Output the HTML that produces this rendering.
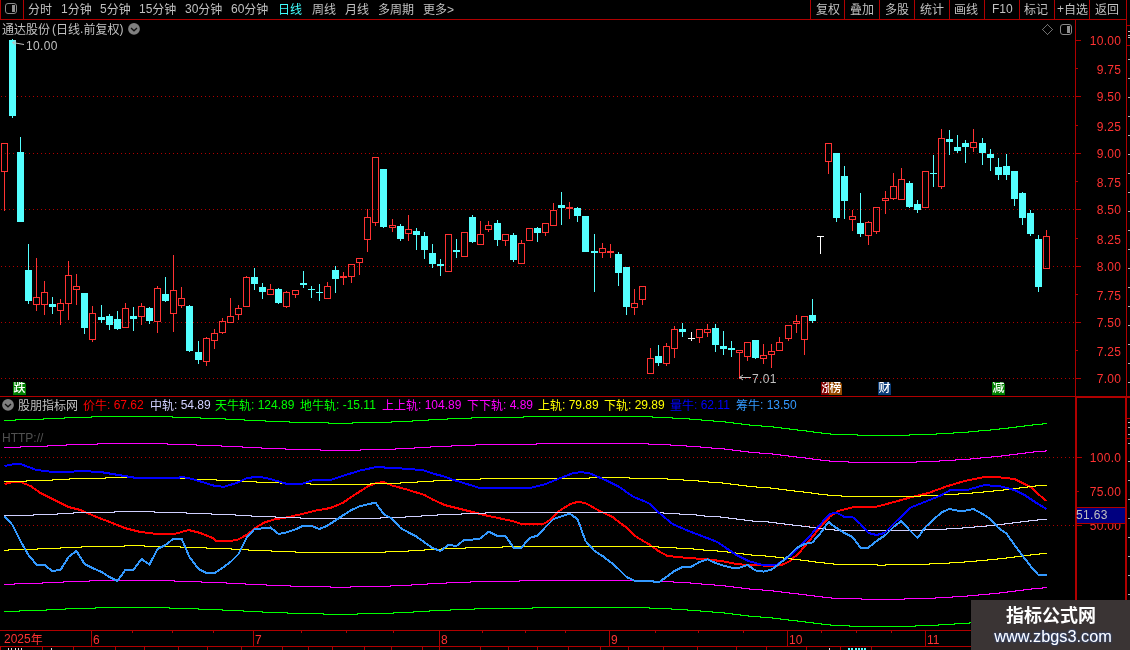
<!DOCTYPE html>
<html><head><meta charset="utf-8"><title>chart</title>
<style>
html,body{margin:0;padding:0;background:#000;}
#root{position:relative;will-change:transform;width:1130px;height:650px;overflow:hidden;background:#000;font-family:"Liberation Sans","Noto Sans CJK SC",sans-serif;}
.t{position:absolute;white-space:nowrap;line-height:16px;font-size:12px;font-weight:400}
.yl{right:9px;color:#ff3232;text-align:right;letter-spacing:0.33px;margin-right:-0.33px}
.n{letter-spacing:0.33px}
.d{position:relative;top:-1px}
.mk{position:absolute;top:382px;width:13px;height:13px;color:#fff;font-size:12px;line-height:13px;text-align:center;overflow:hidden;font-weight:500;clip-path:polygon(0 0,11px 0,13px 2px,13px 13px,0 13px)}
#wm{position:absolute;left:971px;top:600px;width:159px;height:50px;background:#3a3434;color:#fff;text-align:center;z-index:5}
#wm .w1{font-size:18px;font-weight:bold;line-height:20px;margin-top:6px;margin-left:1px}
#wm .w2{font-size:16.3px;line-height:18px;margin-top:1px;margin-left:5px;text-shadow:0 0 2px #36c}
</style></head><body><div id="root">
<svg width="1130" height="650" viewBox="0 0 1130 650" shape-rendering="crispEdges" style="position:absolute;left:0;top:0"><path d="M1 96.5H1074" stroke="#b00000" stroke-width="1" stroke-dasharray="1 3" fill="none"/>
<path d="M1 153.5H1074" stroke="#b00000" stroke-width="1" stroke-dasharray="1 3" fill="none"/>
<path d="M1 209.5H1074" stroke="#b00000" stroke-width="1" stroke-dasharray="1 3" fill="none"/>
<path d="M1 266.5H1074" stroke="#b00000" stroke-width="1" stroke-dasharray="1 3" fill="none"/>
<path d="M1 322.5H1074" stroke="#b00000" stroke-width="1" stroke-dasharray="1 3" fill="none"/>
<path d="M1 378.5H1074" stroke="#b00000" stroke-width="1" stroke-dasharray="1 3" fill="none"/>
<path d="M1 457.5H1074" stroke="#b00000" stroke-width="1" stroke-dasharray="1 3" fill="none"/>
<path d="M1 525.5H1074" stroke="#b00000" stroke-width="1" stroke-dasharray="1 3" fill="none"/>
<rect x="4" y="172" width="1" height="39" fill="#ff3232"/>
<rect x="1.5" y="143.5" width="6" height="28" fill="none" stroke="#ff3232" stroke-width="1"/>
<rect x="12" y="39" width="1" height="79" fill="#54ffff"/>
<rect x="9" y="40" width="7" height="76" fill="#54ffff"/>
<rect x="20" y="137" width="1" height="85" fill="#54ffff"/>
<rect x="17" y="152" width="7" height="70" fill="#54ffff"/>
<rect x="28" y="244" width="1" height="60" fill="#54ffff"/>
<rect x="25" y="270" width="7" height="31" fill="#54ffff"/>
<rect x="36" y="258" width="1" height="39" fill="#ff3232"/>
<rect x="36" y="305" width="1" height="6" fill="#ff3232"/>
<rect x="33.5" y="297.5" width="6" height="7" fill="none" stroke="#ff3232" stroke-width="1"/>
<rect x="44" y="281" width="1" height="11" fill="#ff3232"/>
<rect x="44" y="305" width="1" height="10" fill="#ff3232"/>
<rect x="41.5" y="292.5" width="6" height="12" fill="none" stroke="#ff3232" stroke-width="1"/>
<rect x="52" y="297" width="1" height="17" fill="#54ffff"/>
<rect x="49" y="304" width="7" height="3" fill="#54ffff"/>
<rect x="60" y="299" width="1" height="4" fill="#ff3232"/>
<rect x="60" y="311" width="1" height="14" fill="#ff3232"/>
<rect x="57.5" y="303.5" width="6" height="7" fill="none" stroke="#ff3232" stroke-width="1"/>
<rect x="68" y="261" width="1" height="14" fill="#ff3232"/>
<rect x="68" y="304" width="1" height="16" fill="#ff3232"/>
<rect x="65.5" y="275.5" width="6" height="28" fill="none" stroke="#ff3232" stroke-width="1"/>
<rect x="76" y="274" width="1" height="12" fill="#ff3232"/>
<rect x="76" y="290" width="1" height="15" fill="#ff3232"/>
<rect x="73.5" y="286.5" width="6" height="3" fill="none" stroke="#ff3232" stroke-width="1"/>
<rect x="84" y="293" width="1" height="41" fill="#54ffff"/>
<rect x="81" y="293" width="7" height="35" fill="#54ffff"/>
<rect x="92" y="306" width="1" height="7" fill="#ff3232"/>
<rect x="92" y="340" width="1" height="2" fill="#ff3232"/>
<rect x="89.5" y="313.5" width="6" height="26" fill="none" stroke="#ff3232" stroke-width="1"/>
<rect x="101" y="305" width="1" height="18" fill="#54ffff"/>
<rect x="98" y="317" width="7" height="3" fill="#54ffff"/>
<rect x="109" y="314" width="1" height="16" fill="#54ffff"/>
<rect x="106" y="316" width="7" height="9" fill="#54ffff"/>
<rect x="117" y="311" width="1" height="19" fill="#54ffff"/>
<rect x="114" y="319" width="7" height="10" fill="#54ffff"/>
<rect x="125" y="303" width="1" height="5" fill="#ff3232"/>
<rect x="122.5" y="308.5" width="6" height="19" fill="none" stroke="#ff3232" stroke-width="1"/>
<rect x="133" y="307" width="1" height="24" fill="#54ffff"/>
<rect x="130" y="316" width="7" height="3" fill="#54ffff"/>
<rect x="141" y="303" width="1" height="3" fill="#ff3232"/>
<rect x="141" y="317" width="1" height="8" fill="#ff3232"/>
<rect x="138.5" y="306.5" width="6" height="10" fill="none" stroke="#ff3232" stroke-width="1"/>
<rect x="149" y="307" width="1" height="17" fill="#54ffff"/>
<rect x="146" y="308" width="7" height="13" fill="#54ffff"/>
<rect x="157" y="286" width="1" height="2" fill="#ff3232"/>
<rect x="157" y="322" width="1" height="11" fill="#ff3232"/>
<rect x="154.5" y="288.5" width="6" height="33" fill="none" stroke="#ff3232" stroke-width="1"/>
<rect x="165" y="277" width="1" height="25" fill="#54ffff"/>
<rect x="162" y="294" width="7" height="7" fill="#54ffff"/>
<rect x="173" y="255" width="1" height="35" fill="#ff3232"/>
<rect x="173" y="314" width="1" height="18" fill="#ff3232"/>
<rect x="170.5" y="290.5" width="6" height="23" fill="none" stroke="#ff3232" stroke-width="1"/>
<rect x="181" y="287" width="1" height="11" fill="#ff3232"/>
<rect x="181" y="306" width="1" height="2" fill="#ff3232"/>
<rect x="178.5" y="298.5" width="6" height="7" fill="none" stroke="#ff3232" stroke-width="1"/>
<rect x="189" y="305" width="1" height="47" fill="#54ffff"/>
<rect x="186" y="306" width="7" height="45" fill="#54ffff"/>
<rect x="198" y="341" width="1" height="23" fill="#54ffff"/>
<rect x="195" y="352" width="7" height="8" fill="#54ffff"/>
<rect x="206" y="337" width="1" height="1" fill="#ff3232"/>
<rect x="206" y="362" width="1" height="4" fill="#ff3232"/>
<rect x="203.5" y="338.5" width="6" height="23" fill="none" stroke="#ff3232" stroke-width="1"/>
<rect x="214" y="329" width="1" height="4" fill="#ff3232"/>
<rect x="214" y="341" width="1" height="8" fill="#ff3232"/>
<rect x="211.5" y="333.5" width="6" height="7" fill="none" stroke="#ff3232" stroke-width="1"/>
<rect x="222" y="318" width="1" height="3" fill="#ff3232"/>
<rect x="222" y="333" width="1" height="1" fill="#ff3232"/>
<rect x="219.5" y="321.5" width="6" height="11" fill="none" stroke="#ff3232" stroke-width="1"/>
<rect x="230" y="298" width="1" height="18" fill="#ff3232"/>
<rect x="227.5" y="316.5" width="6" height="6" fill="none" stroke="#ff3232" stroke-width="1"/>
<rect x="238" y="305" width="1" height="3" fill="#ff3232"/>
<rect x="238" y="315" width="1" height="5" fill="#ff3232"/>
<rect x="235.5" y="308.5" width="6" height="6" fill="none" stroke="#ff3232" stroke-width="1"/>
<rect x="246" y="276" width="1" height="1" fill="#ff3232"/>
<rect x="243.5" y="277.5" width="6" height="29" fill="none" stroke="#ff3232" stroke-width="1"/>
<rect x="254" y="268" width="1" height="22" fill="#54ffff"/>
<rect x="251" y="277" width="7" height="7" fill="#54ffff"/>
<rect x="262" y="283" width="1" height="16" fill="#54ffff"/>
<rect x="259" y="287" width="7" height="5" fill="#54ffff"/>
<rect x="270" y="284" width="1" height="5" fill="#ff3232"/>
<rect x="267.5" y="289.5" width="6" height="5" fill="none" stroke="#ff3232" stroke-width="1"/>
<rect x="278" y="288" width="1" height="16" fill="#54ffff"/>
<rect x="275" y="289" width="7" height="14" fill="#54ffff"/>
<rect x="286" y="291" width="1" height="1" fill="#ff3232"/>
<rect x="286" y="307" width="1" height="1" fill="#ff3232"/>
<rect x="283.5" y="292.5" width="6" height="14" fill="none" stroke="#ff3232" stroke-width="1"/>
<rect x="295" y="295" width="1" height="3" fill="#ff3232"/>
<rect x="292.5" y="290.5" width="6" height="4" fill="none" stroke="#ff3232" stroke-width="1"/>
<rect x="303" y="271" width="1" height="17" fill="#54ffff"/>
<rect x="300" y="283" width="7" height="2" fill="#54ffff"/>
<rect x="311" y="286" width="1" height="12" fill="#54ffff"/>
<rect x="308" y="289" width="7" height="1" fill="#54ffff"/>
<rect x="319" y="284" width="1" height="17" fill="#54ffff"/>
<rect x="316" y="292" width="7" height="1" fill="#54ffff"/>
<rect x="327" y="282" width="1" height="4" fill="#ff3232"/>
<rect x="324.5" y="286.5" width="6" height="12" fill="none" stroke="#ff3232" stroke-width="1"/>
<rect x="335" y="266" width="1" height="27" fill="#54ffff"/>
<rect x="332" y="270" width="7" height="9" fill="#54ffff"/>
<rect x="343" y="272" width="1" height="4" fill="#ff3232"/>
<rect x="343" y="278" width="1" height="7" fill="#ff3232"/>
<rect x="340" y="276" width="7" height="2" fill="#ff3232"/>
<rect x="351" y="277" width="1" height="6" fill="#ff3232"/>
<rect x="348.5" y="264.5" width="6" height="12" fill="none" stroke="#ff3232" stroke-width="1"/>
<rect x="359" y="263" width="1" height="12" fill="#ff3232"/>
<rect x="356.5" y="258.5" width="6" height="4" fill="none" stroke="#ff3232" stroke-width="1"/>
<rect x="367" y="209" width="1" height="8" fill="#ff3232"/>
<rect x="367" y="240" width="1" height="12" fill="#ff3232"/>
<rect x="364.5" y="217.5" width="6" height="22" fill="none" stroke="#ff3232" stroke-width="1"/>
<rect x="375" y="223" width="1" height="3" fill="#ff3232"/>
<rect x="372.5" y="157.5" width="6" height="65" fill="none" stroke="#ff3232" stroke-width="1"/>
<rect x="383" y="169" width="1" height="59" fill="#54ffff"/>
<rect x="380" y="169" width="7" height="58" fill="#54ffff"/>
<rect x="392" y="219" width="1" height="6" fill="#ff3232"/>
<rect x="392" y="228" width="1" height="4" fill="#ff3232"/>
<rect x="389.5" y="225.5" width="6" height="2" fill="none" stroke="#ff3232" stroke-width="1"/>
<rect x="400" y="224" width="1" height="17" fill="#54ffff"/>
<rect x="397" y="226" width="7" height="13" fill="#54ffff"/>
<rect x="408" y="215" width="1" height="14" fill="#ff3232"/>
<rect x="408" y="234" width="1" height="7" fill="#ff3232"/>
<rect x="405.5" y="229.5" width="6" height="4" fill="none" stroke="#ff3232" stroke-width="1"/>
<rect x="416" y="228" width="1" height="22" fill="#54ffff"/>
<rect x="413" y="231" width="7" height="4" fill="#54ffff"/>
<rect x="424" y="232" width="1" height="27" fill="#54ffff"/>
<rect x="421" y="236" width="7" height="14" fill="#54ffff"/>
<rect x="432" y="244" width="1" height="24" fill="#54ffff"/>
<rect x="429" y="253" width="7" height="11" fill="#54ffff"/>
<rect x="440" y="259" width="1" height="17" fill="#54ffff"/>
<rect x="437" y="264" width="7" height="2" fill="#54ffff"/>
<rect x="445.5" y="234.5" width="6" height="37" fill="none" stroke="#ff3232" stroke-width="1"/>
<rect x="456" y="239" width="1" height="19" fill="#54ffff"/>
<rect x="453" y="250" width="7" height="2" fill="#54ffff"/>
<rect x="461.5" y="232.5" width="6" height="24" fill="none" stroke="#ff3232" stroke-width="1"/>
<rect x="472" y="215" width="1" height="28" fill="#54ffff"/>
<rect x="469" y="217" width="7" height="25" fill="#54ffff"/>
<rect x="480" y="221" width="1" height="13" fill="#ff3232"/>
<rect x="477.5" y="234.5" width="6" height="10" fill="none" stroke="#ff3232" stroke-width="1"/>
<rect x="488" y="221" width="1" height="4" fill="#ff3232"/>
<rect x="488" y="230" width="1" height="2" fill="#ff3232"/>
<rect x="485.5" y="225.5" width="6" height="4" fill="none" stroke="#ff3232" stroke-width="1"/>
<rect x="497" y="220" width="1" height="26" fill="#54ffff"/>
<rect x="494" y="223" width="7" height="17" fill="#54ffff"/>
<rect x="505" y="241" width="1" height="5" fill="#ff3232"/>
<rect x="502.5" y="234.5" width="6" height="6" fill="none" stroke="#ff3232" stroke-width="1"/>
<rect x="513" y="233" width="1" height="29" fill="#54ffff"/>
<rect x="510" y="235" width="7" height="25" fill="#54ffff"/>
<rect x="521" y="240" width="1" height="3" fill="#ff3232"/>
<rect x="518.5" y="243.5" width="6" height="20" fill="none" stroke="#ff3232" stroke-width="1"/>
<rect x="526.5" y="228.5" width="6" height="12" fill="none" stroke="#ff3232" stroke-width="1"/>
<rect x="537" y="227" width="1" height="15" fill="#54ffff"/>
<rect x="534" y="228" width="7" height="5" fill="#54ffff"/>
<rect x="545" y="233" width="1" height="3" fill="#ff3232"/>
<rect x="542.5" y="223.5" width="6" height="9" fill="none" stroke="#ff3232" stroke-width="1"/>
<rect x="553" y="203" width="1" height="7" fill="#ff3232"/>
<rect x="550.5" y="210.5" width="6" height="15" fill="none" stroke="#ff3232" stroke-width="1"/>
<rect x="561" y="192" width="1" height="33" fill="#54ffff"/>
<rect x="558" y="205" width="7" height="3" fill="#54ffff"/>
<rect x="569" y="202" width="1" height="5" fill="#ff3232"/>
<rect x="569" y="209" width="1" height="10" fill="#ff3232"/>
<rect x="566" y="207" width="7" height="2" fill="#ff3232"/>
<rect x="577" y="207" width="1" height="15" fill="#54ffff"/>
<rect x="574" y="208" width="7" height="8" fill="#54ffff"/>
<rect x="585" y="216" width="1" height="36" fill="#54ffff"/>
<rect x="582" y="216" width="7" height="36" fill="#54ffff"/>
<rect x="594" y="234" width="1" height="58" fill="#54ffff"/>
<rect x="591" y="251" width="7" height="2" fill="#54ffff"/>
<rect x="602" y="243" width="1" height="5" fill="#ff3232"/>
<rect x="602" y="253" width="1" height="5" fill="#ff3232"/>
<rect x="599.5" y="248.5" width="6" height="4" fill="none" stroke="#ff3232" stroke-width="1"/>
<rect x="610" y="244" width="1" height="7" fill="#ff3232"/>
<rect x="610" y="253" width="1" height="5" fill="#ff3232"/>
<rect x="607" y="251" width="7" height="2" fill="#ff3232"/>
<rect x="618" y="252" width="1" height="34" fill="#54ffff"/>
<rect x="615" y="254" width="7" height="19" fill="#54ffff"/>
<rect x="626" y="267" width="1" height="48" fill="#54ffff"/>
<rect x="623" y="267" width="7" height="40" fill="#54ffff"/>
<rect x="634" y="289" width="1" height="14" fill="#ff3232"/>
<rect x="634" y="308" width="1" height="7" fill="#ff3232"/>
<rect x="631.5" y="303.5" width="6" height="4" fill="none" stroke="#ff3232" stroke-width="1"/>
<rect x="642" y="300" width="1" height="5" fill="#ff3232"/>
<rect x="639.5" y="286.5" width="6" height="13" fill="none" stroke="#ff3232" stroke-width="1"/>
<rect x="650" y="348" width="1" height="10" fill="#ff3232"/>
<rect x="647.5" y="358.5" width="6" height="15" fill="none" stroke="#ff3232" stroke-width="1"/>
<rect x="658" y="345" width="1" height="21" fill="#54ffff"/>
<rect x="655" y="356" width="7" height="7" fill="#54ffff"/>
<rect x="666" y="343" width="1" height="3" fill="#ff3232"/>
<rect x="666" y="364" width="1" height="2" fill="#ff3232"/>
<rect x="663.5" y="346.5" width="6" height="17" fill="none" stroke="#ff3232" stroke-width="1"/>
<rect x="674" y="326" width="1" height="3" fill="#ff3232"/>
<rect x="674" y="349" width="1" height="9" fill="#ff3232"/>
<rect x="671.5" y="329.5" width="6" height="19" fill="none" stroke="#ff3232" stroke-width="1"/>
<rect x="682" y="323" width="1" height="14" fill="#54ffff"/>
<rect x="679" y="329" width="7" height="3" fill="#54ffff"/>
<rect x="691" y="332" width="1" height="9" fill="#ffffff"/>
<rect x="688" y="338" width="7" height="1" fill="#ffffff"/>
<rect x="699" y="338" width="1" height="5" fill="#ff3232"/>
<rect x="696.5" y="329.5" width="6" height="8" fill="none" stroke="#ff3232" stroke-width="1"/>
<rect x="707" y="324" width="1" height="5" fill="#ff3232"/>
<rect x="707" y="333" width="1" height="4" fill="#ff3232"/>
<rect x="704.5" y="329.5" width="6" height="3" fill="none" stroke="#ff3232" stroke-width="1"/>
<rect x="715" y="324" width="1" height="28" fill="#54ffff"/>
<rect x="712" y="328" width="7" height="17" fill="#54ffff"/>
<rect x="723" y="331" width="1" height="24" fill="#54ffff"/>
<rect x="720" y="346" width="7" height="3" fill="#54ffff"/>
<rect x="731" y="341" width="1" height="16" fill="#54ffff"/>
<rect x="728" y="348" width="7" height="2" fill="#54ffff"/>
<rect x="739" y="353" width="1" height="26" fill="#ff3232"/>
<rect x="736.5" y="350.5" width="6" height="2" fill="none" stroke="#ff3232" stroke-width="1"/>
<rect x="747" y="357" width="1" height="4" fill="#ff3232"/>
<rect x="744.5" y="342.5" width="6" height="14" fill="none" stroke="#ff3232" stroke-width="1"/>
<rect x="755" y="340" width="1" height="19" fill="#54ffff"/>
<rect x="752" y="340" width="7" height="18" fill="#54ffff"/>
<rect x="763" y="344" width="1" height="11" fill="#ff3232"/>
<rect x="763" y="359" width="1" height="5" fill="#ff3232"/>
<rect x="760.5" y="355.5" width="6" height="3" fill="none" stroke="#ff3232" stroke-width="1"/>
<rect x="771" y="344" width="1" height="7" fill="#ff3232"/>
<rect x="771" y="355" width="1" height="13" fill="#ff3232"/>
<rect x="768.5" y="351.5" width="6" height="3" fill="none" stroke="#ff3232" stroke-width="1"/>
<rect x="779" y="337" width="1" height="5" fill="#ff3232"/>
<rect x="776.5" y="342.5" width="6" height="8" fill="none" stroke="#ff3232" stroke-width="1"/>
<rect x="788" y="339" width="1" height="2" fill="#ff3232"/>
<rect x="785.5" y="325.5" width="6" height="13" fill="none" stroke="#ff3232" stroke-width="1"/>
<rect x="796" y="315" width="1" height="6" fill="#ff3232"/>
<rect x="796" y="324" width="1" height="9" fill="#ff3232"/>
<rect x="793.5" y="321.5" width="6" height="2" fill="none" stroke="#ff3232" stroke-width="1"/>
<rect x="804" y="340" width="1" height="15" fill="#ff3232"/>
<rect x="801.5" y="316.5" width="6" height="23" fill="none" stroke="#ff3232" stroke-width="1"/>
<rect x="812" y="299" width="1" height="24" fill="#54ffff"/>
<rect x="809" y="315" width="7" height="6" fill="#54ffff"/>
<rect x="817" y="236" width="7" height="1" fill="#fff"/><rect x="820" y="236" width="1" height="18" fill="#fff"/>
<rect x="828" y="162" width="1" height="12" fill="#ff3232"/>
<rect x="825.5" y="143.5" width="6" height="18" fill="none" stroke="#ff3232" stroke-width="1"/>
<rect x="836" y="153" width="1" height="69" fill="#54ffff"/>
<rect x="833" y="153" width="7" height="65" fill="#54ffff"/>
<rect x="844" y="166" width="1" height="53" fill="#54ffff"/>
<rect x="841" y="176" width="7" height="25" fill="#54ffff"/>
<rect x="852" y="210" width="1" height="6" fill="#ff3232"/>
<rect x="852" y="220" width="1" height="11" fill="#ff3232"/>
<rect x="849.5" y="216.5" width="6" height="3" fill="none" stroke="#ff3232" stroke-width="1"/>
<rect x="860" y="193" width="1" height="44" fill="#54ffff"/>
<rect x="857" y="223" width="7" height="11" fill="#54ffff"/>
<rect x="868" y="221" width="1" height="1" fill="#ff3232"/>
<rect x="868" y="236" width="1" height="9" fill="#ff3232"/>
<rect x="865.5" y="222.5" width="6" height="13" fill="none" stroke="#ff3232" stroke-width="1"/>
<rect x="876" y="232" width="1" height="2" fill="#ff3232"/>
<rect x="873.5" y="207.5" width="6" height="24" fill="none" stroke="#ff3232" stroke-width="1"/>
<rect x="885" y="191" width="1" height="7" fill="#ff3232"/>
<rect x="885" y="201" width="1" height="13" fill="#ff3232"/>
<rect x="882.5" y="198.5" width="6" height="2" fill="none" stroke="#ff3232" stroke-width="1"/>
<rect x="893" y="173" width="1" height="13" fill="#ff3232"/>
<rect x="893" y="199" width="1" height="1" fill="#ff3232"/>
<rect x="890.5" y="186.5" width="6" height="12" fill="none" stroke="#ff3232" stroke-width="1"/>
<rect x="901" y="168" width="1" height="11" fill="#ff3232"/>
<rect x="898.5" y="179.5" width="6" height="20" fill="none" stroke="#ff3232" stroke-width="1"/>
<rect x="909" y="181" width="1" height="27" fill="#54ffff"/>
<rect x="906" y="183" width="7" height="24" fill="#54ffff"/>
<rect x="917" y="200" width="1" height="13" fill="#54ffff"/>
<rect x="914" y="204" width="7" height="6" fill="#54ffff"/>
<rect x="922.5" y="171.5" width="6" height="36" fill="none" stroke="#ff3232" stroke-width="1"/>
<rect x="933" y="155" width="1" height="32" fill="#54ffff"/>
<rect x="930" y="173" width="7" height="1" fill="#54ffff"/>
<rect x="941" y="129" width="1" height="9" fill="#ff3232"/>
<rect x="941" y="187" width="1" height="2" fill="#ff3232"/>
<rect x="938.5" y="138.5" width="6" height="48" fill="none" stroke="#ff3232" stroke-width="1"/>
<rect x="949" y="130" width="1" height="25" fill="#54ffff"/>
<rect x="946" y="139" width="7" height="3" fill="#54ffff"/>
<rect x="957" y="135" width="1" height="18" fill="#54ffff"/>
<rect x="954" y="147" width="7" height="4" fill="#54ffff"/>
<rect x="965" y="140" width="1" height="23" fill="#54ffff"/>
<rect x="962" y="143" width="7" height="4" fill="#54ffff"/>
<rect x="973" y="129" width="1" height="13" fill="#ff3232"/>
<rect x="973" y="148" width="1" height="4" fill="#ff3232"/>
<rect x="970.5" y="142.5" width="6" height="5" fill="none" stroke="#ff3232" stroke-width="1"/>
<rect x="982" y="138" width="1" height="27" fill="#54ffff"/>
<rect x="979" y="143" width="7" height="10" fill="#54ffff"/>
<rect x="990" y="149" width="1" height="22" fill="#54ffff"/>
<rect x="987" y="154" width="7" height="4" fill="#54ffff"/>
<rect x="998" y="158" width="1" height="22" fill="#54ffff"/>
<rect x="995" y="167" width="7" height="8" fill="#54ffff"/>
<rect x="1006" y="154" width="1" height="26" fill="#54ffff"/>
<rect x="1003" y="166" width="7" height="9" fill="#54ffff"/>
<rect x="1014" y="171" width="1" height="35" fill="#54ffff"/>
<rect x="1011" y="171" width="7" height="28" fill="#54ffff"/>
<rect x="1022" y="192" width="1" height="33" fill="#54ffff"/>
<rect x="1019" y="193" width="7" height="25" fill="#54ffff"/>
<rect x="1030" y="210" width="1" height="26" fill="#54ffff"/>
<rect x="1027" y="213" width="7" height="21" fill="#54ffff"/>
<rect x="1038" y="235" width="1" height="57" fill="#54ffff"/>
<rect x="1035" y="239" width="7" height="48" fill="#54ffff"/>
<rect x="1046" y="230" width="1" height="6" fill="#ff3232"/>
<rect x="1043.5" y="236.5" width="6" height="32" fill="none" stroke="#ff3232" stroke-width="1"/>
<polyline points="4.5,484 12.5,482 20.5,482 30.5,486 40.5,493 52.5,499 68.5,507 80.5,510 96.5,517 112.5,523 124.5,528 140.5,532 156.5,534 174.5,534 188.5,530 200.5,533 212.5,538 216.5,541 230.5,541 238.5,539.4 246.5,535 256.5,527 264.5,522.4 274.5,519.4 286.5,517.4 300.5,514.4 316.5,510.4 330.5,508 342.5,503 356.5,493.6 368.5,486 376.5,483 383.5,482 392.5,485.6 408.5,490 424.5,495 432.5,499.4 444.5,505 464.5,510 488.5,516 512.5,521 522.5,524.4 542.5,524.4 548.5,521 560.5,510 570.5,504 578.5,501.6 586.5,503.6 598.5,510.4 612.5,517 624.5,526 636.5,537 648.5,544 658.5,551 667.5,556 688.5,558 708.5,559.4 724.5,561.6 738.5,564.4 756.5,565 768.5,566 780.5,565.4 788.5,562 798.5,553.6 808.5,541.6 820.5,527 830.5,516 838.5,511 852.5,507.4 874.5,507 876.5,506.6 890.5,503 910.5,497.4 928.5,493 946.5,486.4 964.5,481 984.5,477 996.5,477 1014.5,479 1030.5,487 1040.5,496 1046.5,501" stroke="#ff0000" stroke-width="2" fill="none" stroke-linejoin="round"/>
<path d="M4 515.5H33V514.5H57V513.5H73V512.5H114V511.5H154V512.5H186V513.5H211V514.5H235V515.5H251V516.5H275V517.5H300V518.5H380V517.5H405V516.5H421V515.5H437V514.5H461V513.5H485V512.5H663V513.5H679V514.5H696V515.5H704V516.5H720V517.5H728V518.5H736V519.5H744V520.5H752V521.5H768V522.5H776V523.5H784V524.5H792V525.5H801V526.5H809V527.5H816V528.5H825V529.5H834V530.5H924V529.5H946V528.5H962V527.5H974V526.5H986V525.5H995V524.5H1004V523.5H1012V522.5H1020V521.5H1028V520.5H1037V519.5H1047" stroke="#d0d0ff" stroke-width="1" fill="none"/>
<path d="M4 420.5H15V419.5H43V418.5H64V417.5H91V416.5H172V417.5H200V418.5H225V419.5H244V420.5H265V421.5H289V422.5H328V423.5H352V422.5H391V421.5H412V420.5H428V419.5H447V418.5H471V417.5H523V416.5H652V417.5H672V418.5H689V419.5H701V420.5H713V421.5H725V422.5H733V423.5H741V424.5H749V425.5H761V426.5H773V427.5H781V428.5H789V429.5H797V430.5H806V431.5H813V432.5H821V433.5H830V434.5H857V435.5H909V434.5H936V433.5H953V432.5H968V431.5H978V430.5H990V429.5H999V428.5H1008V427.5H1016V426.5H1024V425.5H1032V424.5H1042V423.5H1047" stroke="#00ff00" stroke-width="1" fill="none"/>
<path d="M4 611.5H19V610.5H46V609.5H65V608.5H95V607.5H169V608.5H198V609.5H222V610.5H243V611.5H262V612.5H287V613.5H323V614.5H357V613.5H393V612.5H413V611.5H429V610.5H450V609.5H474V608.5H532V607.5H649V608.5H671V609.5H687V610.5H700V611.5H712V612.5H724V613.5H732V614.5H740V615.5H748V616.5H760V617.5H772V618.5H780V619.5H788V620.5H797V621.5H805V622.5H813V623.5H821V624.5H830V625.5H849V626.5H915V625.5H938V624.5H954V623.5H969V622.5H979V621.5H990V620.5H1000V619.5H1009V618.5H1017V617.5H1025V616.5H1033V615.5H1044V614.5H1047" stroke="#00ff00" stroke-width="1" fill="none"/>
<path d="M4 447.5H20V446.5H47V445.5H66V444.5H97V443.5H167V444.5H196V445.5H221V446.5H242V447.5H261V448.5H285V449.5H320V450.5H360V449.5H395V448.5H414V447.5H430V446.5H451V445.5H475V444.5H536V443.5H648V444.5H670V445.5H686V446.5H700V447.5H711V448.5H724V449.5H732V450.5H740V451.5H748V452.5H759V453.5H772V454.5H780V455.5H788V456.5H796V457.5H805V458.5H812V459.5H820V460.5H829V461.5H848V462.5H916V461.5H939V460.5H955V459.5H970V458.5H980V457.5H991V456.5H1001V455.5H1009V454.5H1017V453.5H1025V452.5H1033V451.5H1045V450.5H1047" stroke="#ff00ff" stroke-width="1" fill="none"/>
<path d="M4 584.5H14V583.5H42V582.5H63V581.5H89V580.5H174V581.5H201V582.5H226V583.5H245V584.5H266V585.5H290V586.5H330V587.5H350V586.5H390V585.5H411V584.5H427V583.5H446V582.5H470V581.5H519V580.5H653V581.5H673V582.5H690V583.5H701V584.5H714V585.5H725V586.5H733V587.5H741V588.5H749V589.5H762V590.5H773V591.5H781V592.5H789V593.5H798V594.5H806V595.5H814V596.5H822V597.5H831V598.5H861V599.5H904V598.5H935V597.5H952V596.5H967V595.5H978V594.5H989V593.5H999V592.5H1007V591.5H1015V590.5H1023V589.5H1031V588.5H1042V587.5H1047" stroke="#ff00ff" stroke-width="1" fill="none"/>
<path d="M4 481.5H26V480.5H52V479.5H69V478.5H105V477.5H161V478.5H191V479.5H216V480.5H239V481.5H256V482.5H280V483.5H310V484.5H370V483.5H400V482.5H417V481.5H433V480.5H456V479.5H480V478.5H589V477.5H629V478.5H667V479.5H683V480.5H698V481.5H708V482.5H722V483.5H730V484.5H738V485.5H746V486.5H756V487.5H770V488.5H778V489.5H786V490.5H794V491.5H803V492.5H811V493.5H818V494.5H827V495.5H841V496.5H920V495.5H942V494.5H958V493.5H972V492.5H983V491.5H993V490.5H1003V489.5H1011V488.5H1019V487.5H1027V486.5H1035V485.5H1047" stroke="#ffff00" stroke-width="1" fill="none"/>
<path d="M4 550.5H8V549.5H37V548.5H60V547.5H81V546.5H124V545.5H144V546.5H180V547.5H206V548.5H231V549.5H248V550.5H271V551.5H295V552.5H385V551.5H408V550.5H424V549.5H441V548.5H465V547.5H502V546.5H658V547.5H676V548.5H693V549.5H703V550.5H717V551.5H727V552.5H735V553.5H743V554.5H751V555.5H765V556.5H775V557.5H783V558.5H791V559.5H800V560.5H808V561.5H815V562.5H824V563.5H833V564.5H877V565.5H885V564.5H929V563.5H949V562.5H964V561.5H976V560.5H987V559.5H997V558.5H1006V557.5H1014V556.5H1022V555.5H1030V554.5H1039V553.5H1047" stroke="#ffff00" stroke-width="1" fill="none"/>
<polyline points="4.5,466 14.5,464 20.5,464 36.5,470 52.5,472 68.5,472 80.5,471 100.5,472 112.5,474 136.5,478 176.5,478 182.5,477 192.5,479 208.5,484 216.5,486.4 224.5,486.6 236.5,483 246.5,478.4 256.5,476.6 266.5,478 278.5,481.4 288.5,484.4 300.5,484.4 312.5,480.4 330.5,480 342.5,476 360.5,470.4 376.5,467 382.5,467 386.5,468 400.5,468.4 416.5,469.6 424.5,470.6 434.5,474 442.5,476 452.5,479.6 478.5,487.6 512.5,488 528.5,488.4 544.5,484.4 560.5,478 572.5,473.4 581.5,472 590.5,473.6 604.5,479.6 618.5,486.4 632.5,496.4 648.5,503 660.5,514 672.5,524 688.5,531 716.5,541.6 736.5,555 748.5,561 762.5,565 776.5,565 788.5,557 800.5,546 812.5,533 822.5,522 829.5,514 836.5,512.6 844.5,517 852.5,517 860.5,524 868.5,533 876.5,535 884.5,533 894.5,523 910.5,507.6 928.5,500.4 940.5,495.6 950.5,490 968.5,489.6 984.5,485 1000.5,486.4 1014.5,490 1024.5,495 1036.5,503 1046.5,509" stroke="#0000ff" stroke-width="2" fill="none" stroke-linejoin="round"/>
<polyline points="4.5,516 12.5,525 20.5,541 28.5,555 36.5,564.6 44.5,565 52.5,571 60.5,570 68.5,557 76.5,551 84.5,564 92.5,568 101.5,572 109.5,577 117.5,581 125.5,569.6 133.5,569.6 141.5,559 149.5,564.6 157.5,549 165.5,545 173.5,538.6 181.5,538.6 189.5,557 198.5,569 206.5,573 214.5,573 222.5,568 230.5,562 238.5,554 246.5,538 254.5,529 262.5,528.4 270.5,527.4 278.5,534 286.5,532.4 295.5,529.4 303.5,525.6 311.5,526 319.5,529 327.5,525.6 335.5,520.4 343.5,515 351.5,510 359.5,506.4 367.5,504.4 375.5,502.6 383.5,514 392.5,519 400.5,528 408.5,532.4 416.5,536.6 424.5,542.4 432.5,548 440.5,551 448.5,545 456.5,546 464.5,539.6 472.5,539.6 480.5,538.4 488.5,531.6 497.5,536 505.5,536 513.5,547.6 521.5,547.6 529.5,538 537.5,535.6 545.5,527 553.5,519 561.5,516.4 569.5,513.6 577.5,519 585.5,541 594.5,551 602.5,556 610.5,562 618.5,569 626.5,577 634.5,580.6 642.5,580.6 650.5,581 658.5,582.4 666.5,577 674.5,571 682.5,567 691.5,566.6 699.5,562 707.5,559.4 715.5,563 723.5,565.6 731.5,567.6 739.5,567.6 747.5,565 755.5,570.4 763.5,571.6 771.5,569.6 779.5,563.6 788.5,556 796.5,548 804.5,544 812.5,542.4 820.5,533 828.5,522 836.5,528 844.5,533 852.5,537 860.5,547.6 868.5,547.6 876.5,541 885.5,535 893.5,527 901.5,521 909.5,530 917.5,538 925.5,527 933.5,519.6 941.5,512.4 949.5,509 957.5,510.6 965.5,510.6 973.5,509 982.5,514 990.5,519 998.5,528 1006.5,533.6 1014.5,545 1022.5,555.6 1030.5,566 1038.5,575 1046.5,575" stroke="#3399ff" stroke-width="2" fill="none" stroke-linejoin="round"/>
<rect x="0" y="19" width="1127" height="1" fill="#b00000"/>
<rect x="0" y="0" width="1" height="20" fill="#b00000"/>
<rect x="23" y="0" width="1" height="20" fill="#b00000"/>
<rect x="810" y="0" width="1" height="20" fill="#b00000"/>
<rect x="844" y="0" width="1" height="20" fill="#b00000"/>
<rect x="879" y="0" width="1" height="20" fill="#b00000"/>
<rect x="914" y="0" width="1" height="20" fill="#b00000"/>
<rect x="949" y="0" width="1" height="20" fill="#b00000"/>
<rect x="984" y="0" width="1" height="20" fill="#b00000"/>
<rect x="1019" y="0" width="1" height="20" fill="#b00000"/>
<rect x="1054" y="0" width="1" height="20" fill="#b00000"/>
<rect x="1089" y="0" width="1" height="20" fill="#b00000"/>
<rect x="1126" y="0" width="1" height="396" fill="#b00000"/>
<rect x="1075" y="20" width="1" height="376" fill="#b00000"/>
<rect x="0" y="396" width="1075" height="1" fill="#b00000"/>
<rect x="1075" y="396" width="55" height="2" fill="#b00000"/>
<rect x="1075" y="396" width="2" height="254" fill="#b00000"/>
<rect x="1125" y="396" width="2" height="254" fill="#b00000"/>
<rect x="1127" y="25" width="3" height="1" fill="#b00000"/>
<rect x="1127" y="45" width="3" height="1" fill="#b00000"/>
<rect x="1127" y="418" width="3" height="1" fill="#b00000"/>
<rect x="1076" y="40" width="5" height="1" fill="#b00000"/>
<rect x="1076" y="68" width="2" height="1" fill="#b00000"/>
<rect x="1076" y="96" width="5" height="1" fill="#b00000"/>
<rect x="1076" y="125" width="2" height="1" fill="#b00000"/>
<rect x="1076" y="153" width="5" height="1" fill="#b00000"/>
<rect x="1076" y="181" width="2" height="1" fill="#b00000"/>
<rect x="1076" y="209" width="5" height="1" fill="#b00000"/>
<rect x="1076" y="238" width="2" height="1" fill="#b00000"/>
<rect x="1076" y="266" width="5" height="1" fill="#b00000"/>
<rect x="1076" y="294" width="2" height="1" fill="#b00000"/>
<rect x="1076" y="322" width="5" height="1" fill="#b00000"/>
<rect x="1076" y="350" width="2" height="1" fill="#b00000"/>
<rect x="1076" y="378" width="5" height="1" fill="#b00000"/>
<rect x="1077" y="457" width="5" height="1" fill="#b00000"/>
<rect x="1077" y="491" width="2" height="1" fill="#b00000"/>
<rect x="1077" y="525" width="5" height="1" fill="#b00000"/>
<rect x="0" y="630" width="1075" height="1" fill="#b00000"/>
<rect x="0" y="646" width="1075" height="1" fill="#b00000"/>
<rect x="91" y="630" width="1" height="16" fill="#b00000"/>
<rect x="253" y="630" width="1" height="16" fill="#b00000"/>
<rect x="439" y="630" width="1" height="16" fill="#b00000"/>
<rect x="609" y="630" width="1" height="16" fill="#b00000"/>
<rect x="787" y="630" width="1" height="16" fill="#b00000"/>
<rect x="925" y="630" width="1" height="16" fill="#b00000"/>
<rect x="132" y="631" width="1" height="2" fill="#b00000"/>
<rect x="172" y="631" width="1" height="2" fill="#b00000"/>
<rect x="213" y="631" width="1" height="2" fill="#b00000"/>
<rect x="301" y="631" width="1" height="2" fill="#b00000"/>
<rect x="346" y="631" width="1" height="2" fill="#b00000"/>
<rect x="393" y="631" width="1" height="2" fill="#b00000"/>
<rect x="482" y="631" width="1" height="2" fill="#b00000"/>
<rect x="525" y="631" width="1" height="2" fill="#b00000"/>
<rect x="565" y="631" width="1" height="2" fill="#b00000"/>
<rect x="655" y="631" width="1" height="2" fill="#b00000"/>
<rect x="698" y="631" width="1" height="2" fill="#b00000"/>
<rect x="743" y="631" width="1" height="2" fill="#b00000"/>
<rect x="821" y="631" width="1" height="2" fill="#b00000"/>
<rect x="856" y="631" width="1" height="2" fill="#b00000"/>
<rect x="891" y="631" width="1" height="2" fill="#b00000"/>
<rect x="0" y="646" width="1" height="4" fill="#b00000"/>
<rect x="42" y="646" width="1" height="4" fill="#b00000"/>
<rect x="73" y="646" width="1" height="4" fill="#b00000"/>
<rect x="115" y="646" width="1" height="4" fill="#b00000"/>
<rect x="144" y="646" width="1" height="4" fill="#b00000"/>
<rect x="178" y="646" width="1" height="4" fill="#b00000"/>
<rect x="207" y="646" width="1" height="4" fill="#b00000"/>
<rect x="241" y="646" width="1" height="4" fill="#b00000"/>
<rect x="282" y="646" width="1" height="4" fill="#b00000"/>
<rect x="308" y="646" width="1" height="4" fill="#b00000"/>
<rect x="332" y="646" width="1" height="4" fill="#b00000"/>
<rect x="364" y="646" width="1" height="4" fill="#b00000"/>
<rect x="391" y="646" width="1" height="4" fill="#b00000"/>
<rect x="422" y="646" width="1" height="4" fill="#b00000"/>
<rect x="439" y="646" width="1" height="4" fill="#b00000"/>
<rect x="480" y="646" width="1" height="4" fill="#b00000"/>
<rect x="508" y="646" width="1" height="4" fill="#b00000"/>
<rect x="537" y="646" width="1" height="4" fill="#b00000"/>
<rect x="568" y="646" width="1" height="4" fill="#b00000"/>
<rect x="600" y="646" width="1" height="4" fill="#b00000"/>
<rect x="628" y="646" width="1" height="4" fill="#b00000"/>
<rect x="663" y="646" width="1" height="4" fill="#b00000"/>
<rect x="697" y="646" width="1" height="4" fill="#b00000"/>
<rect x="736" y="646" width="1" height="4" fill="#b00000"/>
<rect x="766" y="646" width="1" height="4" fill="#b00000"/>
<rect x="806" y="646" width="1" height="4" fill="#b00000"/>
<rect x="840" y="646" width="1" height="4" fill="#b00000"/>
<rect x="871" y="646" width="1" height="4" fill="#b00000"/>
<rect x="8" y="648" width="1" height="2" fill="#e0e0e0"/>
<rect x="11" y="648" width="1" height="2" fill="#e0e0e0"/>
<rect x="15" y="648" width="1" height="2" fill="#e0e0e0"/>
<rect x="18" y="648" width="1" height="2" fill="#e0e0e0"/>
<rect x="21" y="648" width="1" height="2" fill="#e0e0e0"/>
<rect x="51" y="648" width="1" height="2" fill="#e0e0e0"/>
<rect x="829" y="648" width="1" height="2" fill="#e0e0e0"/>
<rect x="848" y="648" width="2" height="2" fill="#54ffff"/>
<rect x="851" y="648" width="2" height="2" fill="#54ffff"/>
<rect x="855" y="648" width="2" height="2" fill="#54ffff"/>
<rect x="858" y="648" width="2" height="2" fill="#54ffff"/>
<rect x="861" y="648" width="2" height="2" fill="#54ffff"/>
<rect x="864" y="648" width="2" height="2" fill="#54ffff"/>
<rect x="1128" y="31" width="2" height="1" fill="#c0c0c0"/>
<rect x="1128" y="35" width="2" height="1" fill="#c0c0c0"/>
<rect x="1128" y="37" width="2" height="1" fill="#c0c0c0"/>
<rect x="1128" y="422" width="2" height="1" fill="#c0c0c0"/>
<rect x="1127" y="397" width="3" height="1" fill="#b00000"/>
<rect x="1128" y="59" width="2" height="1" fill="#b0b0b0"/>
<rect x="1128" y="78" width="2" height="1" fill="#b0b0b0"/>
<rect x="1128" y="97" width="2" height="1" fill="#b0b0b0"/>
<rect x="1128" y="116" width="2" height="1" fill="#b0b0b0"/>
<rect x="1128" y="135" width="2" height="1" fill="#b0b0b0"/>
<rect x="1128" y="154" width="2" height="1" fill="#b0b0b0"/>
<rect x="1128" y="173" width="2" height="1" fill="#b0b0b0"/>
<rect x="1128" y="192" width="2" height="1" fill="#b0b0b0"/>
<rect x="1128" y="211" width="2" height="1" fill="#b0b0b0"/>
<rect x="1128" y="230" width="2" height="1" fill="#b0b0b0"/>
<rect x="1128" y="249" width="2" height="1" fill="#b0b0b0"/>
<rect x="1128" y="268" width="2" height="1" fill="#b0b0b0"/>
<rect x="1128" y="287" width="2" height="1" fill="#b0b0b0"/>
<rect x="1128" y="306" width="2" height="1" fill="#b0b0b0"/>
<rect x="1128" y="325" width="2" height="1" fill="#b0b0b0"/>
<rect x="1128" y="344" width="2" height="1" fill="#b0b0b0"/>
<rect x="1128" y="363" width="2" height="1" fill="#b0b0b0"/>
<rect x="1128" y="382" width="2" height="1" fill="#b0b0b0"/>
<rect x="1127" y="438" width="3" height="1" fill="#b00000"/>
<rect x="1128" y="427" width="2" height="1" fill="#b0b0b0"/>
<rect x="1128" y="434" width="2" height="1" fill="#b0b0b0"/>
<rect x="1128" y="443" width="2" height="1" fill="#b0b0b0"/>
<rect x="1128" y="461" width="2" height="1" fill="#b0b0b0"/>
<rect x="1128" y="480" width="2" height="1" fill="#b0b0b0"/>
<rect x="1128" y="499" width="2" height="1" fill="#b0b0b0"/>
<rect x="1128" y="518" width="2" height="1" fill="#b0b0b0"/>
<rect x="1128" y="537" width="2" height="1" fill="#b0b0b0"/>
<rect x="1128" y="556" width="2" height="1" fill="#b0b0b0"/>
<rect x="1128" y="575" width="2" height="1" fill="#b0b0b0"/>
<rect x="1128" y="594" width="2" height="1" fill="#b0b0b0"/></svg>

<svg style="position:absolute;left:0;top:0" width="1130" height="650" viewBox="0 0 1130 650">
<rect x="5.5" y="3.5" width="11" height="10" rx="2.5" fill="none" stroke="#8a8a8a"/><rect x="12" y="5" width="3" height="7" fill="#909090"/>
<rect x="1060.5" y="24.5" width="11" height="10" rx="2.5" fill="none" stroke="#8a8a8a"/><rect x="1067" y="26" width="3" height="7" fill="#909090"/>
<path d="M1042.5 29.5L1047.5 24.5L1052.5 29.5L1047.5 34.5Z" fill="none" stroke="#707070" shape-rendering="crispEdges"/>
<circle cx="134" cy="28.9" r="5.9" fill="#808080"/><path d="M131 28L134 30.8L137 28" fill="none" stroke="#101010" stroke-width="1.3"/>
<circle cx="8" cy="404.9" r="5.9" fill="#808080"/><path d="M5 404L8 406.8L11 404" fill="none" stroke="#101010" stroke-width="1.3"/>
<path d="M12.5 42.5L24 44.5M12.5 42.5L16 40.5M12.5 42.5L15.5 45" stroke="#c0c0c0" fill="none"/>
<path d="M739.5 377.5H751M739.5 377.5L743 375M739.5 377.5L743 380" stroke="#c0c0c0" fill="none"/>
</svg>
<div class="t" style="left:28px;top:2px;color:#c0c0c0;font-size:12px;">分时</div><div class="t" style="left:61px;top:2px;color:#c0c0c0;font-size:12px;"><span class="d">1</span>分钟</div><div class="t" style="left:100px;top:2px;color:#c0c0c0;font-size:12px;"><span class="d">5</span>分钟</div><div class="t" style="left:139px;top:2px;color:#c0c0c0;font-size:12px;"><span class="d">15</span>分钟</div><div class="t" style="left:185px;top:2px;color:#c0c0c0;font-size:12px;"><span class="d">30</span>分钟</div><div class="t" style="left:231px;top:2px;color:#c0c0c0;font-size:12px;"><span class="d">60</span>分钟</div><div class="t" style="left:278px;top:2px;color:#40ffff;font-size:12px;">日线</div><div class="t" style="left:312px;top:2px;color:#c0c0c0;font-size:12px;">周线</div><div class="t" style="left:345px;top:2px;color:#c0c0c0;font-size:12px;">月线</div><div class="t" style="left:378px;top:2px;color:#c0c0c0;font-size:12px;">多周期</div><div class="t" style="left:423px;top:2px;color:#c0c0c0;font-size:12px;">更多&gt;</div><div class="t" style="left:816px;top:2px;color:#c0c0c0;font-size:12px;">复权</div><div class="t" style="left:850px;top:2px;color:#c0c0c0;font-size:12px;">叠加</div><div class="t" style="left:885px;top:2px;color:#c0c0c0;font-size:12px;">多股</div><div class="t" style="left:920px;top:2px;color:#c0c0c0;font-size:12px;">统计</div><div class="t" style="left:954px;top:2px;color:#c0c0c0;font-size:12px;">画线</div><div class="t" style="left:992px;top:1px;color:#c0c0c0;font-size:12px;">F10</div><div class="t" style="left:1024px;top:2px;color:#c0c0c0;font-size:12px;">标记</div><div class="t" style="left:1057px;top:2px;color:#c0c0c0;font-size:12px;"><span class="d">+</span>自选</div><div class="t" style="left:1095px;top:2px;color:#c0c0c0;font-size:12px;">返回</div><div class="t" style="left:2px;top:22px;color:#c0c0c0;font-size:12px;">通达股份<span style="margin-left:2px"><span class="d">(</span></span>日线<span class="d">.</span>前复权<span class="d">)</span></div><div class="t n" style="left:26px;top:38px;color:#c0c0c0;font-size:12px;">10.00</div><div class="t n" style="left:752px;top:371px;color:#c0c0c0;font-size:12px;">7.01</div><div class="t yl" style="top:33px">10.00</div><div class="t yl" style="top:62px">9.75</div><div class="t yl" style="top:89px">9.50</div><div class="t yl" style="top:119px">9.25</div><div class="t yl" style="top:146px">9.00</div><div class="t yl" style="top:175px">8.75</div><div class="t yl" style="top:202px">8.50</div><div class="t yl" style="top:232px">8.25</div><div class="t yl" style="top:259px">8.00</div><div class="t yl" style="top:288px">7.75</div><div class="t yl" style="top:315px">7.50</div><div class="t yl" style="top:344px">7.25</div><div class="t yl" style="top:371px">7.00</div><div class="t yl" style="top:450px">100.0</div><div class="t yl" style="top:484px">75.00</div><div class="t yl" style="top:518px">50.00</div><div style="position:absolute;left:1077px;top:507px;width:48px;height:15px;background:#000080;border-top:1px solid #b00000;border-bottom:1px solid #b00000;z-index:2"></div><div class="t n" style="left:1076px;top:507px;color:#c0c0c0;z-index:3">51.63</div><div class="t" style="left:18px;top:398px;color:#c0c0c0;font-size:12px;">股朋指标网</div><div class="t" style="left:83px;top:398px;color:#ff0000;font-size:12px;">价牛<span class="d">: 67.62</span></div><div class="t" style="left:150px;top:398px;color:#d0d0ff;font-size:12px;">中轨<span class="d">: 54.89</span></div><div class="t" style="left:215px;top:398px;color:#00ff00;font-size:12px;">天牛轨<span class="d">: 124.89</span></div><div class="t" style="left:300px;top:398px;color:#00ff00;font-size:12px;">地牛轨<span class="d">: -15.11</span></div><div class="t" style="left:382px;top:398px;color:#ff00ff;font-size:12px;">上上轨<span class="d">: 104.89</span></div><div class="t" style="left:467px;top:398px;color:#ff00ff;font-size:12px;">下下轨<span class="d">: 4.89</span></div><div class="t" style="left:538px;top:398px;color:#ffff00;font-size:12px;">上轨<span class="d">: 79.89</span></div><div class="t" style="left:604px;top:398px;color:#ffff00;font-size:12px;">下轨<span class="d">: 29.89</span></div><div class="t" style="left:670px;top:398px;color:#0000ff;font-size:12px;">量牛<span class="d">: 62.11</span></div><div class="t" style="left:736px;top:398px;color:#3399ff;font-size:12px;">筹牛<span class="d">: 13.50</span></div><div class="t" style="left:2px;top:430px;color:#505050;font-size:12px;">HTTP://</div><div class="t" style="left:4px;top:632px;color:#ff3232;font-size:12px;"><span class="d">2025</span>年</div><div class="t" style="left:93px;top:632px;color:#ff3232;font-size:12px;">6</div><div class="t" style="left:255px;top:632px;color:#ff3232;font-size:12px;">7</div><div class="t" style="left:441px;top:632px;color:#ff3232;font-size:12px;">8</div><div class="t" style="left:611px;top:632px;color:#ff3232;font-size:12px;">9</div><div class="t" style="left:789px;top:632px;color:#ff3232;font-size:12px;">10</div><div class="t" style="left:927px;top:632px;color:#ff3232;font-size:12px;">11</div><div class="mk" style="left:13px;background:#008000">跌</div><div class="mk" style="left:821px;background:#800000">涨</div><div class="mk" style="left:829px;background:#964b00">榜</div><div class="mk" style="left:878px;background:#0a3c78">财</div><div class="mk" style="left:992px;background:#008000">减</div>
<div id="wm"><div class="w1">指标公式网</div><div class="w2">www.zbgs3.com</div></div>
</div></body></html>
